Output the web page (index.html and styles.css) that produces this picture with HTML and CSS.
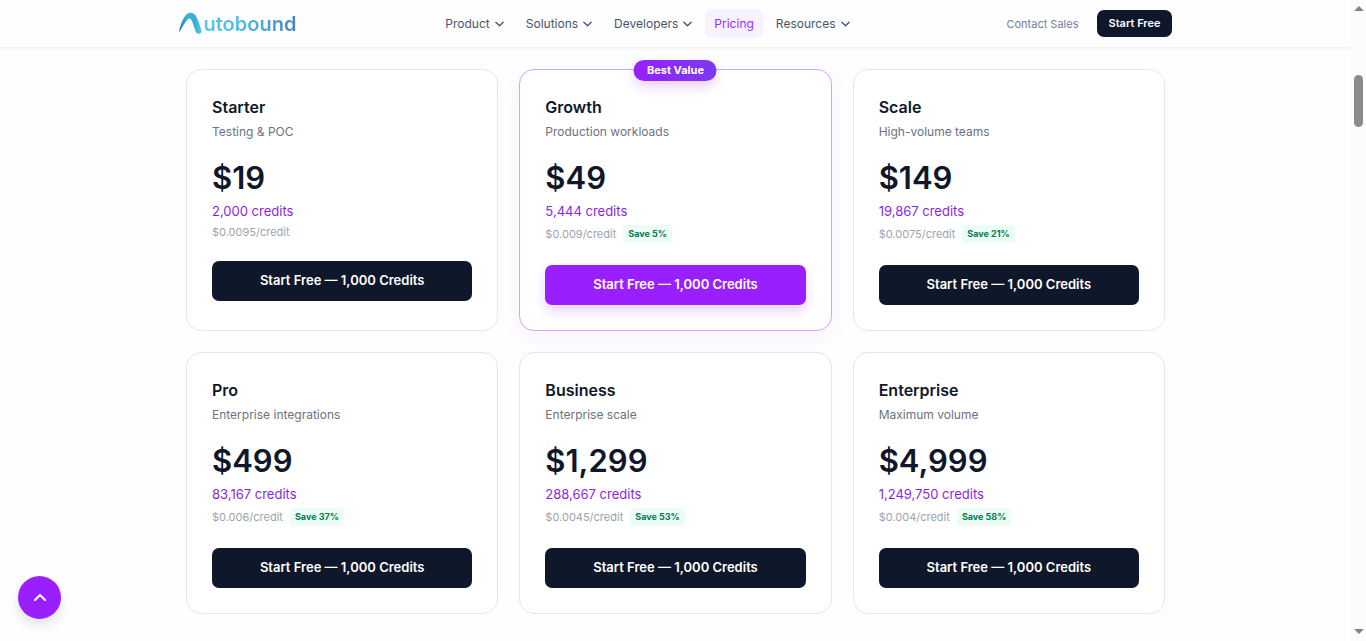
FILE: index.html
```html
<!DOCTYPE html>
<html lang="en">
<head>
<meta charset="utf-8">
<meta name="viewport" content="width=device-width, initial-scale=1">
<title>Autobound Pricing</title>
<link rel="stylesheet" href="styles.css">
</head>
<body>
<div class="page">
  <header class="header">
    <div class="header-inner">
      <a class="logo" href="#" aria-label="Autobound">
        <svg class="logo-mark" viewBox="0 0 25 23" aria-hidden="true">
          <defs><linearGradient id="mark" x1="0" x2="1" y1="0" y2="0"><stop offset="0" stop-color="#2f79ba"/><stop offset=".4" stop-color="#36b5dc"/><stop offset=".7" stop-color="#35aed8"/><stop offset="1" stop-color="#5ccbea"/></linearGradient></defs>
          <path fill="url(#mark)" d="M0.200 20.800C.4 14.800 3.400 7.200 7 3C9.800 0 14 0 16.600 3.400C19 6.800 20.600 12.400 22.400 18.200C23.400 22 18.400 23.200 16.900 20C15.200 15.800 14 10.600 12 7.600C11 6.200 9.800 6.300 8.600 7.600C5.200 11.400 2.800 16 .2 20.800Z"/>
        </svg>
        <span class="logo-text">utobound</span>
      </a>
      <nav class="nav">
        <button class="nav-item" type="button">Product<svg class="chev" viewBox="0 0 10 6"><path d="M1 1l4 4 4-4"/></svg></button>
        <button class="nav-item" type="button">Solutions<svg class="chev" viewBox="0 0 10 6"><path d="M1 1l4 4 4-4"/></svg></button>
        <button class="nav-item" type="button">Developers<svg class="chev" viewBox="0 0 10 6"><path d="M1 1l4 4 4-4"/></svg></button>
        <a class="nav-item active" href="#">Pricing</a>
        <button class="nav-item" type="button">Resources<svg class="chev" viewBox="0 0 10 6"><path d="M1 1l4 4 4-4"/></svg></button>
      </nav>
      <div class="actions">
        <a class="contact" href="#">Contact Sales</a>
        <a class="start" href="#">Start Free</a>
      </div>
    </div>
  </header>
  <main class="plans">
    <article class="card">
      <h3 class="name">Starter</h3>
      <p class="desc">Testing &amp; POC</p>
      <p class="price">$19</p>
      <p class="credits">2,000 credits</p>
      <div class="rate"><span>$0.0095/credit</span></div>
      <a class="cta" href="#">Start Free — 1,000 Credits</a>
    </article>
    <article class="card featured">
      <span class="ribbon">Best Value</span>
      <h3 class="name">Growth</h3>
      <p class="desc">Production workloads</p>
      <p class="price">$49</p>
      <p class="credits">5,444 credits</p>
      <div class="rate"><span>$0.009/credit</span><span class="save">Save 5%</span></div>
      <a class="cta" href="#">Start Free — 1,000 Credits</a>
    </article>
    <article class="card">
      <h3 class="name">Scale</h3>
      <p class="desc">High-volume teams</p>
      <p class="price">$149</p>
      <p class="credits">19,867 credits</p>
      <div class="rate"><span>$0.0075/credit</span><span class="save">Save 21%</span></div>
      <a class="cta" href="#">Start Free — 1,000 Credits</a>
    </article>
    <article class="card">
      <h3 class="name">Pro</h3>
      <p class="desc">Enterprise integrations</p>
      <p class="price">$499</p>
      <p class="credits">83,167 credits</p>
      <div class="rate"><span>$0.006/credit</span><span class="save">Save 37%</span></div>
      <a class="cta" href="#">Start Free — 1,000 Credits</a>
    </article>
    <article class="card">
      <h3 class="name">Business</h3>
      <p class="desc">Enterprise scale</p>
      <p class="price">$1,299</p>
      <p class="credits">288,667 credits</p>
      <div class="rate"><span>$0.0045/credit</span><span class="save">Save 53%</span></div>
      <a class="cta" href="#">Start Free — 1,000 Credits</a>
    </article>
    <article class="card">
      <h3 class="name">Enterprise</h3>
      <p class="desc">Maximum volume</p>
      <p class="price">$4,999</p>
      <p class="credits">1,249,750 credits</p>
      <div class="rate"><span>$0.004/credit</span><span class="save">Save 58%</span></div>
      <a class="cta" href="#">Start Free — 1,000 Credits</a>
    </article>
  </main>
</div>
<div class="scrollbar" aria-hidden="true">
  <svg class="arrow" viewBox="0 0 10 5"><path d="M0 5L5 0l5 5z"/></svg>
  <div class="track"><div class="thumb"></div></div>
  <svg class="arrow" viewBox="0 0 10 5"><path d="M0 0l5 5 5-5z"/></svg>
</div>
<button class="to-top" type="button" aria-label="Back to top"><svg viewBox="0 0 12 7"><path d="M1 6l5-5 5 5"/></svg></button>
</body>
</html>
```

FILE: styles.css
```css
* { box-sizing: border-box; }

body {
  margin: 0;
  display: flex;
  min-height: 100vh;
  background: #fefefe;
  color: #0f172a;
  font-family: Inter, "Liberation Sans", sans-serif;
}

a { color: inherit; text-decoration: none; }
h3, p { margin: 0; }

.page { flex: 1; min-width: 0; }

.header {
  background: #fefefe;
  border-bottom: 1px solid #f1f2f4;
  box-shadow: 0 1px 2px rgba(15, 23, 42, 0.05);
}

.header-inner {
  display: flex;
  align-items: center;
  justify-content: space-between;
  max-width: 994px;
  height: 47px;
  margin: 0 auto;
}

.logo { display: flex; align-items: center; }
.logo-mark { width: 25px; height: 23px; }
.logo-text {
  font-size: 20px;
  line-height: 24px;
  font-weight: 600;
  background: linear-gradient(90deg, #58c5e9, #52bde5 40%, #4a83bf);
  -webkit-background-clip: text;
  background-clip: text;
  color: transparent;
}

.nav { display: flex; align-items: center; gap: 4px; }
.nav-item {
  display: flex;
  align-items: center;
  gap: 5px;
  height: 29px;
  padding: 0 9px;
  border: 0;
  border-radius: 7px;
  background: transparent;
  color: #475569;
  font: 400 12px/16px Inter, "Liberation Sans", sans-serif;
}
.nav-item.active { background: #f8f1ff; color: #9a2eff; }

.chev { width: 9px; height: 6px; }
.chev path, .to-top path {
  fill: none;
  stroke: currentColor;
  stroke-width: 2;
  stroke-linecap: round;
  stroke-linejoin: round;
}
.chev path { stroke-width: 1.5; }

.actions { display: flex; align-items: center; gap: 10px; }
.contact { padding: 0 8px; color: #73809a; font-size: 11px; line-height: 16px; }
.start {
  padding: 6px 12px;
  border-radius: 7px;
  background: #0f172a;
  color: #fff;
  font-size: 11px;
  line-height: 15px;
  font-weight: 600;
}

.plans {
  display: grid;
  grid-template-columns: repeat(3, minmax(0, 1fr));
  gap: 21px;
  max-width: 979px;
  margin: 0 auto;
  padding: 21px 0 27px;
}

.card {
  position: relative;
  padding: 25px;
  border: 1px solid #e4e6ea;
  border-radius: 15px;
  background: #fff;
}
.featured {
  border-color: #d4a3fb;
  box-shadow: 0 8px 22px rgba(152, 32, 255, 0.06);
}

.ribbon {
  position: absolute;
  top: -10px;
  left: 50%;
  transform: translateX(-50%);
  padding: 3px 13px;
  border-radius: 11px;
  background: linear-gradient(90deg, #971fff, #7c3aed);
  box-shadow: 0 6px 12px rgba(152, 32, 255, 0.2);
  color: #fff;
  font-size: 11px;
  line-height: 15px;
  font-weight: 700;
  white-space: nowrap;
}

.name { font-size: 16px; line-height: 24px; font-weight: 600; }
.desc { margin-top: 3px; color: #6b7280; font-size: 12px; line-height: 20px; }
.price { margin-top: 16px; font-size: 31px; line-height: 40px; font-weight: 600; }
.credits { margin-top: 3px; color: #8a1fe8; font-size: 13px; line-height: 20px; }
.rate {
  display: flex;
  align-items: center;
  gap: 7px;
  margin-top: 4px;
  color: #9ca3af;
  font-size: 11px;
  line-height: 14px;
}
.save {
  padding: 2px 5px;
  border-radius: 4px;
  background: #ebfdf4;
  color: #087a55;
  font-size: 9px;
  line-height: 14px;
  font-weight: 700;
}

.cta {
  display: block;
  margin-top: 22px;
  padding: 9px 0 11px;
  border-radius: 7px;
  background: #0f172a;
  color: #fff;
  font-size: 13px;
  line-height: 20px;
  font-weight: 600;
  text-align: center;
}
.featured .cta {
  background: #991fff;
  box-shadow: 0 6px 12px rgba(152, 32, 255, 0.2);
}

.scrollbar {
  display: flex;
  flex-direction: column;
  align-items: center;
  flex: 0 0 15px;
  padding: 6px 0 7px;
  background: #fcfcfc;
}
.arrow { width: 10px; height: 5px; fill: #858585; }
.track { flex: 1; padding-top: 64px; }
.thumb { width: 9px; height: 52px; border-radius: 5px; background: #8b8b8b; }

.to-top {
  position: fixed;
  left: 18px;
  bottom: 22px;
  display: flex;
  align-items: center;
  justify-content: center;
  width: 43px;
  height: 43px;
  padding: 0;
  border: 0;
  border-radius: 50%;
  background: #991fff;
  box-shadow: 0 6px 12px rgba(15, 23, 42, 0.12);
  color: #fff;
}
.to-top svg { width: 12px; height: 7px; }
```
